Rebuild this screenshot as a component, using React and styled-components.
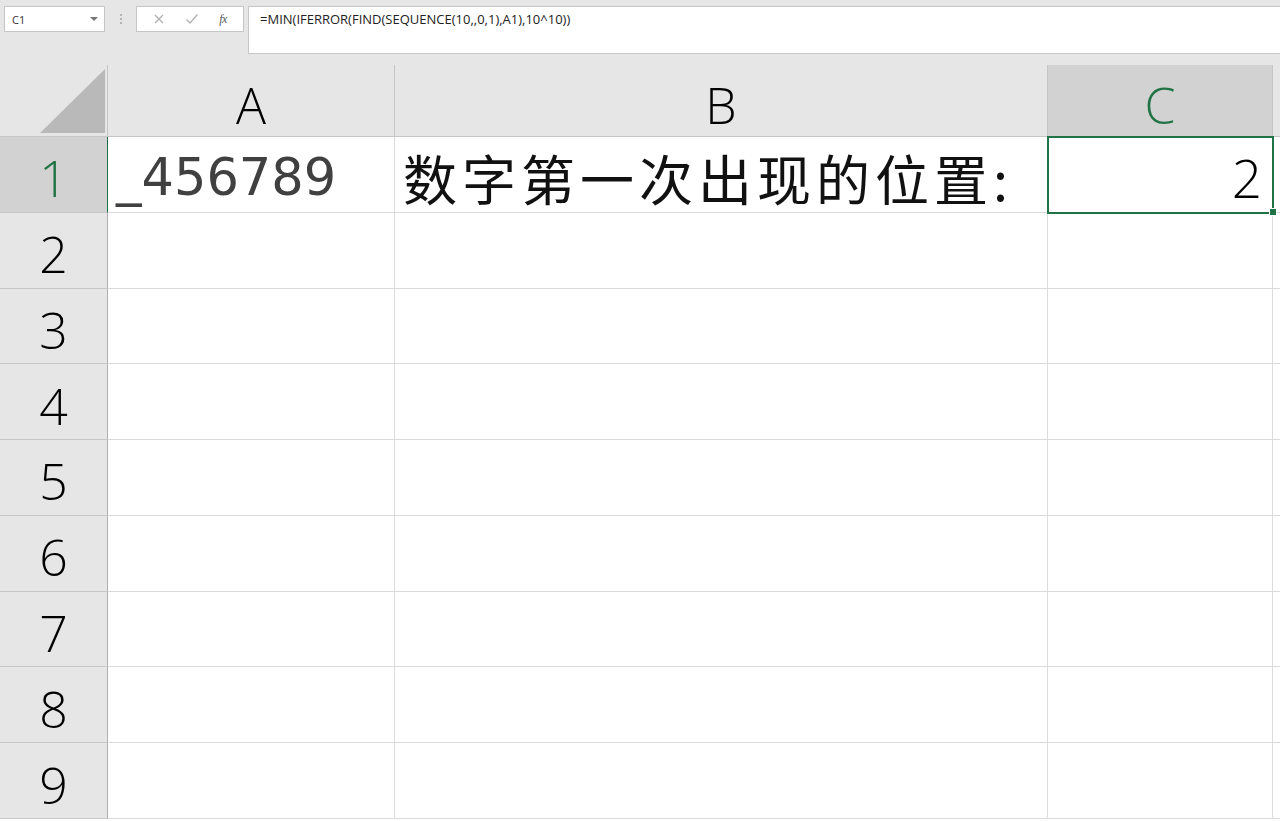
import React from "react";
import styled, { createGlobalStyle } from "styled-components";

const GlobalStyle = createGlobalStyle`
  html, body {
    margin: 0;
    padding: 0;
    background: #e6e6e6;
    overflow: hidden;
  }
  #root {
    width: 1280px;
    height: 821px;
  }
`;

const GREEN = "#217346";

const Page = styled.div`
  width: 1280px;
  height: 821px;
  background: #e6e6e6;
  display: flex;
  flex-direction: column;
  font-family: "Open Sans", "Noto Sans", sans-serif;
`;

const Toolbar = styled.div`
  display: flex;
  align-items: flex-start;
  padding: 5px 0 0 4px;
  height: 49px;
  margin-bottom: 11px;
`;

const NameBox = styled.div`
  width: 101px;
  height: 26px;
  background: #fff;
  border: 1px solid #c6c6c6;
  display: flex;
  align-items: center;
  justify-content: space-between;
  padding: 0 6px 0 7px;
  box-sizing: border-box;
  font-size: 11px;
  color: #333;
  margin-top: 1px;
`;

const Caret = styled.span`
  width: 0;
  height: 0;
  border-left: 4px solid transparent;
  border-right: 4px solid transparent;
  border-top: 4px solid #777;
`;

const Grip = styled.div`
  width: 31px;
  height: 27px;
  display: flex;
  flex-direction: column;
  align-items: center;
  justify-content: center;
  gap: 2px;
  span {
    width: 2px;
    height: 2px;
    background: #b5b5b5;
  }
`;

const IconBox = styled.div`
  width: 108px;
  height: 26px;
  background: #fff;
  border: 1px solid #c6c6c6;
  box-sizing: border-box;
  display: flex;
  align-items: center;
  justify-content: space-around;
  padding: 0 6px;
  margin-top: 1px;
`;

const Fx = styled.span`
  font-family: "Liberation Serif", serif;
  font-style: italic;
  font-size: 12px;
  color: #555;
  letter-spacing: -0.5px;
`;

const FormulaBar = styled.div`
  flex: 1;
  margin-left: 4px;
  height: 48px;
  margin-top: 1px;
  background: #fff;
  border: 1px solid #c6c6c6;
  border-right: none;
  box-sizing: border-box;
  padding: 3px 0 0 11px;
  font-size: 13px;
  color: #222;
  white-space: nowrap;
`;

const Sheet = styled.div`
  display: grid;
  grid-template-columns: 108px 287px 653px 225px 1fr;
  grid-template-rows: 72px repeat(9, 75.78px);
  background: #fff;
  flex: 1;
  overflow: hidden;
`;

const Corner = styled.div`
  background: #e6e6e6;
  border-right: 1px solid #c6c6c6;
  border-bottom: 1px solid #c6c6c6;
  display: flex;
  align-items: flex-end;
  justify-content: flex-end;
  padding: 0 2px 3px 0;
`;

const Triangle = styled.div`
  width: 65px;
  height: 64px;
  background: #b9b9b9;
  clip-path: polygon(100% 0, 100% 100%, 0 100%);
`;

const ColHead = styled.div`
  background: ${(p) => (p.$active ? "#d2d2d2" : "#e6e6e6")};
  color: ${(p) => (p.$active ? GREEN : "#000")};
  border-right: 1px solid #c6c6c6;
  border-bottom: 1px solid #c6c6c6;
  display: flex;
  align-items: center;
  justify-content: center;
  font-family: "Open Sans", sans-serif;
  font-weight: 300;
  font-size: 50px;
  padding-top: 8px;
  box-sizing: border-box;
`;

const RowHead = styled.div`
  background: ${(p) => (p.$active ? "#d2d2d2" : "#e6e6e6")};
  color: ${(p) => (p.$active ? GREEN : "#000")};
  border-right: 1px solid ${(p) => (p.$active ? GREEN : "#b0b0b0")};
  border-bottom: 1px solid #c6c6c6;
  display: flex;
  align-items: center;
  justify-content: center;
  font-family: "Open Sans", sans-serif;
  font-weight: 300;
  font-size: 50px;
  padding-top: 8px;
  box-sizing: border-box;
`;

const Cell = styled.div`
  position: relative;
  border-right: 1px solid #dcdcdc;
  border-bottom: 1px solid #dadada;
  display: flex;
  align-items: center;
  justify-content: ${(p) => (p.$right ? "flex-end" : "flex-start")};
  padding: 6px ${(p) => (p.$right ? "10px" : "0")} 0 ${(p) => (p.$right ? "0" : "8px")};
  box-sizing: border-box;
  white-space: nowrap;
  overflow: visible;
  ${(p) =>
    p.$selected &&
    `
    outline: 2px solid ${GREEN};
    outline-offset: -1px;
    z-index: 2;
    &::after {
      content: "";
      position: absolute;
      right: -5px;
      bottom: -4px;
      width: 6px;
      height: 6px;
      background: ${GREEN};
      border: 1px solid #fff;
    }
  `}
`;

const TextValue = styled.span`
  font-family: "DejaVu Sans", sans-serif;
  font-size: 51px;
  color: #404040;
`;

const CjkValue = styled.span`
  font-family: "Noto Sans CJK SC", sans-serif;
  font-size: 54px;
  letter-spacing: 5px;
  color: #111;
`;

const NumValue = styled.span`
  font-family: "Open Sans", sans-serif;
  font-weight: 300;
  font-size: 53px;
  color: #000;
`;

const Cross = () => (
  <svg width="12" height="12" viewBox="0 0 12 12">
    <path d="M2 2 L10 10 M10 2 L2 10" stroke="#b0b0b0" strokeWidth="1.3" fill="none" />
  </svg>
);

const Check = () => (
  <svg width="14" height="12" viewBox="0 0 14 12">
    <path d="M1.5 6.5 L5 10 L12.5 1.5" stroke="#b0b0b0" strokeWidth="1.3" fill="none" />
  </svg>
);

const rows = [1, 2, 3, 4, 5, 6, 7, 8, 9];

export default function App() {
  return (
    <Page>
      <GlobalStyle />
      <Toolbar>
        <NameBox>
          C1
          <Caret />
        </NameBox>
        <Grip>
          <span />
          <span />
          <span />
        </Grip>
        <IconBox>
          <Cross />
          <Check />
          <Fx>fx</Fx>
        </IconBox>
        <FormulaBar>=MIN(IFERROR(FIND(SEQUENCE(10,,0,1),A1),10^10))</FormulaBar>
      </Toolbar>
      <Sheet>
        <Corner>
          <Triangle />
        </Corner>
        <ColHead>A</ColHead>
        <ColHead>B</ColHead>
        <ColHead $active>C</ColHead>
        <ColHead />
        {rows.map((r) => (
          <React.Fragment key={r}>
            <RowHead $active={r === 1}>{r}</RowHead>
            {r === 1 ? (
              <>
                <Cell>
                  <TextValue>_456789</TextValue>
                </Cell>
                <Cell>
                  <CjkValue>数字第一次出现的位置:</CjkValue>
                </Cell>
                <Cell $right $selected>
                  <NumValue>2</NumValue>
                </Cell>
                <Cell />
              </>
            ) : (
              <>
                <Cell />
                <Cell />
                <Cell />
                <Cell />
              </>
            )}
          </React.Fragment>
        ))}
      </Sheet>
    </Page>
  );
}
